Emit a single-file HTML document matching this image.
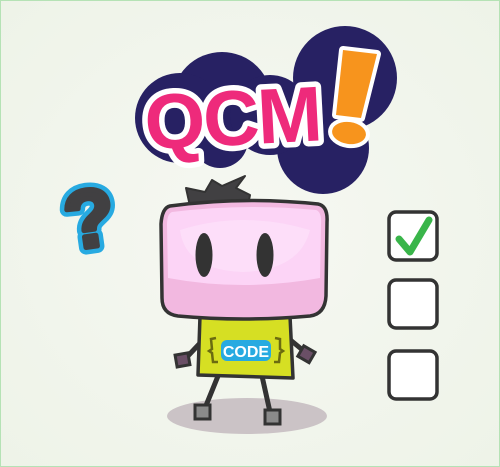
<!DOCTYPE html>
<html><head><meta charset="utf-8"><style>
html,body{margin:0;padding:0;background:#f2f6ee;}
svg{display:block}
</style></head><body>
<svg width="500" height="467" viewBox="0 0 500 467" xmlns="http://www.w3.org/2000/svg">
<defs><radialGradient id="bg" cx="0.5" cy="0.5" r="0.7"><stop offset="0" stop-color="#f6f8f2"/><stop offset="1" stop-color="#eef3e8"/></radialGradient></defs>
<rect x="0" y="0" width="500" height="467" fill="url(#bg)"/>
<rect x="0.5" y="0.5" width="499" height="466" fill="none" stroke="#b5e2b5" stroke-width="1"/>
<!-- cloud -->
<g fill="#272163">
<circle cx="345" cy="78" r="52"/>
<circle cx="323" cy="148" r="46"/>
<circle cx="222" cy="102" r="50"/>
<circle cx="180" cy="118" r="45"/>
<circle cx="220" cy="140" r="28"/>
<circle cx="270" cy="115" r="40"/>
</g>
<!-- QCM -->
<text x="232" y="145" text-anchor="middle" font-family="Liberation Sans, sans-serif" font-weight="bold" font-size="78" fill="#ee2a7b" stroke="#fff" stroke-width="11" stroke-linejoin="round" paint-order="stroke" letter-spacing="-2" transform="rotate(-3 232 110)">QCM</text>
<!-- exclamation -->
<g stroke="#fff" stroke-width="8" stroke-linejoin="round" paint-order="stroke" fill="#f7941d">
<path d="M343 50 L377 54 L361 118 L336 115 Z"/>
<ellipse cx="349" cy="133" rx="17" ry="11" transform="rotate(8 349 133)"/>
</g>
<!-- question -->
<g transform="rotate(-8 88 215)" font-family="Liberation Sans, sans-serif" font-weight="bold" font-size="82" text-anchor="middle" stroke-linejoin="round">
<text x="89" y="247" fill="#27aae1" stroke="#27aae1" stroke-width="14">?</text>
<text x="89" y="247" fill="#414042" stroke="#414042" stroke-width="5">?</text>
</g>
<!-- shadow -->
<ellipse cx="247" cy="416" rx="80" ry="18" fill="#cbc3c6"/>
<!-- legs -->
<g stroke="#333" stroke-width="5" stroke-linecap="round" fill="none">
<path d="M218 376 L205 408"/><path d="M262 376 L270 412"/>
<path d="M203 340 L186 358"/><path d="M288 338 L305 352"/>
</g>
<rect x="195" y="405" width="15" height="14" fill="#8a8a8a" stroke="#333" stroke-width="3"/>
<rect x="265" y="410" width="15" height="14" fill="#8a8a8a" stroke="#333" stroke-width="3"/>
<rect x="176" y="354" width="13" height="12" fill="#6a4f66" stroke="#333" stroke-width="3" transform="rotate(-10 182 360)"/>
<rect x="300" y="348" width="13" height="12" fill="#6a4f66" stroke="#333" stroke-width="3" transform="rotate(30 306 354)"/>
<!-- shirt -->
<path d="M200 316 L290 316 L293 378 L198 375 Z" fill="#d6df23" stroke="#333" stroke-width="3.5" stroke-linejoin="round"/>
<rect x="221" y="340" width="50" height="21" rx="6" fill="#27aae1"/>
<text x="246" y="357" text-anchor="middle" font-family="Liberation Sans, sans-serif" font-weight="bold" font-size="16" fill="#fff">CODE</text>
<g stroke="#6b6b10" stroke-width="2.5" fill="none">
<path d="M216 338 L211 339 L212 349 L209 351 L212 353 L213 362 L218 362"/>
<path d="M275 338 L280 339 L280 349 L283 351 L280 353 L279 362 L274 362"/>
</g>
<!-- hair -->
<path d="M186 188 L205 192 L212 180 L222 186 L245 176 L236 188 L250 195 L248 205 L190 206 Z" fill="#414042" stroke="#333" stroke-width="2" stroke-linejoin="round"/>
<!-- head -->
<path d="M170 206 Q243 196 318 204 Q328 206 327 222 L326 296 Q325 314 310 316 Q243 322 178 316 Q162 314 162 298 L161 224 Q162 208 170 206 Z" fill="#f2b8e0" stroke="#333" stroke-width="3.5"/>
<path d="M172 212 Q243 203 316 210 Q322 212 321 225 L320 278 Q243 292 168 278 L167 225 Q167 214 172 212 Z" fill="#fcd4f6"/>
<path d="M180 230 Q243 210 310 230 Q300 270 243 272 Q185 270 180 230 Z" fill="#fde4fb" opacity="0.6"/>
<ellipse cx="204" cy="255" rx="8.5" ry="22" fill="#333"/>
<ellipse cx="265" cy="255" rx="8.5" ry="22" fill="#333"/>
<!-- checkboxes -->
<g fill="#fff" stroke="#333" stroke-width="3.5">
<rect x="389" y="212" width="48" height="48" rx="7"/>
<rect x="389" y="280" width="48" height="48" rx="7"/>
<rect x="389" y="351" width="48" height="48" rx="7"/>
</g>
<path d="M399 239 L410 252 L429 220" fill="none" stroke="#39b54a" stroke-width="7" stroke-linecap="round" stroke-linejoin="round"/>
</svg>
</body></html>
